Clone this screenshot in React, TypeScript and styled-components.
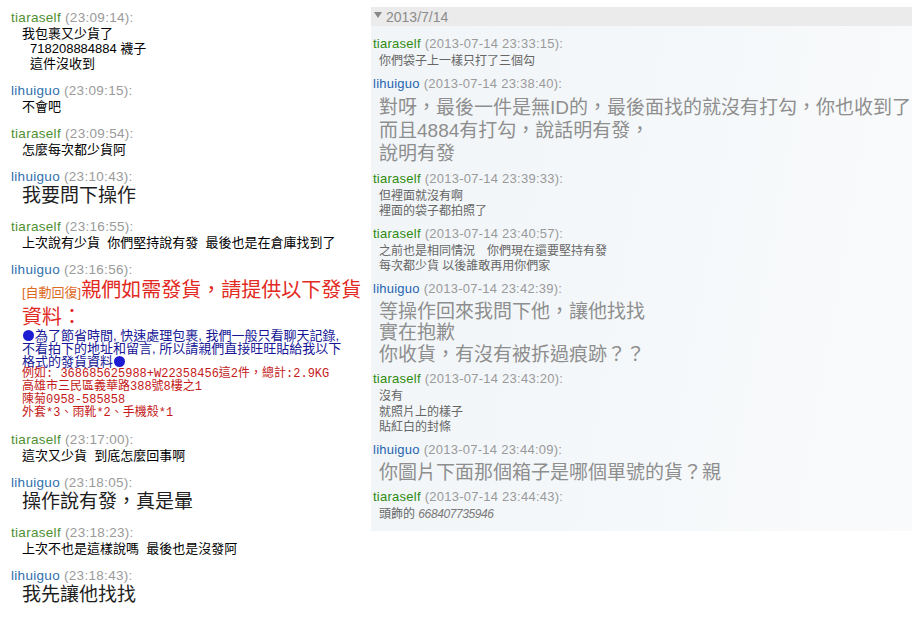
import { FC } from 'react';
import styled, { createGlobalStyle } from 'styled-components';

type Who = 'tiaraself' | 'lihuiguo';
type Side = 'left' | 'right';

interface LineData {
  text: string;
  big?: boolean;
  indent?: number;
}

interface MessageData {
  who: Who;
  time: string;
  lines: LineData[];
  tall?: boolean;
}

const leftMessages: MessageData[] = [
  {
    who: 'tiaraself',
    time: '23:09:14',
    lines: [
      { text: '我包裹又少貨了' },
      { text: '718208884884 襪子', indent: 8 },
      { text: '這件沒收到', indent: 8 },
    ],
  },
  { who: 'lihuiguo', time: '23:09:15', lines: [{ text: '不會吧' }] },
  { who: 'tiaraself', time: '23:09:54', lines: [{ text: '怎麼每次都少貨阿' }] },
  { who: 'lihuiguo', time: '23:10:43', lines: [{ text: '我要問下操作', big: true }] },
  {
    who: 'tiaraself',
    time: '23:16:55',
    lines: [{ text: '上次說有少貨  你們堅持說有發  最後也是在倉庫找到了' }],
  },
];

const leftMessagesAfter: MessageData[] = [
  { who: 'tiaraself', time: '23:17:00', lines: [{ text: '這次又少貨  到底怎麼回事啊' }] },
  { who: 'lihuiguo', time: '23:18:05', lines: [{ text: '操作說有發，真是暈', big: true }] },
  {
    who: 'tiaraself',
    time: '23:18:23',
    lines: [{ text: '上次不也是這樣說嗎  最後也是沒發阿' }],
  },
  { who: 'lihuiguo', time: '23:18:43', lines: [{ text: '我先讓他找找', big: true }] },
];

const rightMessages: MessageData[] = [
  {
    who: 'tiaraself',
    time: '2013-07-14 23:33:15',
    lines: [{ text: '你們袋子上一樣只打了三個勾' }],
  },
  {
    who: 'lihuiguo',
    time: '2013-07-14 23:38:40',
    tall: true,
    lines: [
      { text: '對呀，最後一件是無ID的，最後面找的就沒有打勾，你也收到了', big: true },
      { text: '而且4884有打勾，說話明有發，', big: true },
      { text: '說明有發', big: true },
    ],
  },
  {
    who: 'tiaraself',
    time: '2013-07-14 23:39:33',
    lines: [{ text: '但裡面就沒有啊' }, { text: '裡面的袋子都拍照了' }],
  },
  {
    who: 'tiaraself',
    time: '2013-07-14 23:40:57',
    lines: [
      { text: '之前也是相同情況　你們現在還要堅持有發' },
      { text: '每次都少貨 以後誰敢再用你們家' },
    ],
  },
  {
    who: 'lihuiguo',
    time: '2013-07-14 23:42:39',
    lines: [
      { text: '等操作回來我問下他，讓他找找', big: true },
      { text: '實在抱歉', big: true },
      { text: '你收貨，有沒有被拆過痕跡？？', big: true },
    ],
  },
  {
    who: 'tiaraself',
    time: '2013-07-14 23:43:20',
    lines: [{ text: '沒有' }, { text: '就照片上的樣子' }, { text: '貼紅白的封條' }],
  },
  {
    who: 'lihuiguo',
    time: '2013-07-14 23:44:09',
    lines: [{ text: '你圖片下面那個箱子是哪個單號的貨？親', big: true }],
  },
];

const GlobalStyle = createGlobalStyle`
  body {
    margin: 0;
    background: #ffffff;
    font-family: "Liberation Sans", "Noto Sans CJK TC", sans-serif;
  }
`;

const CJK = `"Liberation Sans", "Noto Sans CJK TC", sans-serif`;

const Page = styled.div`
  display: flex;
  align-items: flex-start;
  width: 912px;
  height: 617px;
  overflow: hidden;
`;

const LeftColumn = styled.div`
  width: 371px;
  flex-shrink: 0;
  box-sizing: border-box;
  padding: 9px 0 0 11px;
  display: flex;
  flex-direction: column;
  gap: 11px;
`;

const RightPanel = styled.div`
  flex: 1;
  margin-top: 7px;
  background: linear-gradient(100deg, #f1f5f8 0%, #f5f8fa 55%, #f9fafb 100%);
  padding-bottom: 8px;
`;

const DateHeader = styled.div`
  height: 19px;
  background: #ebebeb;
  display: flex;
  align-items: center;
  gap: 4px;
  padding-left: 3px;
  color: #8c8c8c;
  font-size: 14px;
  font-family: "Liberation Sans", sans-serif;
`;

const Caret = styled.span`
  width: 0;
  height: 0;
  border-left: 4px solid transparent;
  border-right: 4px solid transparent;
  border-top: 6px solid #888888;
  margin-top: -4px;
`;

const RightList = styled.div`
  padding: 9px 0 0 2px;
  display: flex;
  flex-direction: column;
  gap: 5px;
`;

const Block = styled.div``;

const NameLine = styled.div<{ $side: Side }>`
  height: 17px;
  line-height: 17px;
  font-size: ${(p) => (p.$side === 'left' ? '13.5px' : '13px')};
  letter-spacing: ${(p) => (p.$side === 'left' ? '0.3px' : '0.25px')};
  white-space: nowrap;
`;

const Sender = styled.span<{ $who: Who; $side: Side }>`
  color: ${(p) =>
    p.$who === 'lihuiguo'
      ? p.$side === 'left'
        ? '#2f6fae'
        : '#1f63b0'
      : p.$side === 'left'
        ? '#4f9032'
        : '#2f8a10'};
`;

const Time = styled.span`
  color: #9a9a9a;
`;

const Body = styled.div<{ $side: Side; $big: boolean }>`
  padding-left: ${(p) => (p.$side === 'left' ? '11px' : '6px')};
  padding-top: ${(p) => (p.$side === 'right' ? (p.$big ? '4px' : '2px') : '0')};
`;

const Line = styled.div<{ $side: Side; $big: boolean; $indent: number; $tall: boolean }>`
  font-family: ${CJK};
  white-space: pre;
  padding-left: ${(p) => p.$indent}px;
  font-size: ${(p) => (p.$big ? '19px' : p.$side === 'left' ? '13px' : '12px')};
  line-height: ${(p) =>
    p.$side === 'left'
      ? p.$big
        ? '22px'
        : '15px'
      : p.$big
        ? p.$tall
          ? '23px'
          : '21.5px'
        : '15.5px'};
  color: ${(p) =>
    p.$side === 'left' ? (p.$big ? '#1e1e1e' : '#000000') : p.$big ? '#8e8e8e' : '#666666'};
`;

const Digits = styled.span`
  font-style: italic;
  color: #7a7a7a;
  letter-spacing: -0.4px;
`;

const AutoReply = styled.div`
  padding-left: 11px;
`;

const AutoHead = styled.div`
  font-family: ${CJK};
  font-size: 20px;
  line-height: 24px;
  color: #e22a22;
  white-space: pre;
`;

const AutoTag = styled.span`
  font-size: 13px;
  color: #dd6a1e;
`;

const AutoBody = styled.div<{ $tone: 'blue' | 'red' }>`
  font-family: ${(p) =>
    p.$tone === 'red'
      ? `"Liberation Mono", "Noto Sans CJK TC", monospace`
      : `"Liberation Sans", "Noto Sans CJK TC", sans-serif`};
  font-size: ${(p) => (p.$tone === 'red' ? '12px' : '13px')};
  line-height: 13px;
  color: ${(p) => (p.$tone === 'red' ? '#c41a1a' : '#161696')};
  white-space: pre;
`;

const Dot = styled.span`
  display: inline-block;
  width: 11px;
  height: 11px;
  border-radius: 50%;
  background: #1c1cd0;
  margin: 0 1px;
  vertical-align: -1px;
`;

const Message: FC<{ data: MessageData; side: Side }> = ({ data, side }) => {
  const big = data.lines.some((l) => l.big);
  return (
    <Block>
      <NameLine $side={side}>
        <Sender $who={data.who} $side={side}>
          {data.who}
        </Sender>{' '}
        <Time>({data.time}):</Time>
      </NameLine>
      <Body $side={side} $big={big}>
        {data.lines.map((l, i) => (
          <Line
            key={i}
            $side={side}
            $big={!!l.big}
            $indent={l.indent ?? 0}
            $tall={!!data.tall}
          >
            {l.text}
          </Line>
        ))}
      </Body>
    </Block>
  );
};

const App: FC = () => {
  return (
    <>
      <GlobalStyle />
      <Page>
        <LeftColumn>
          {leftMessages.map((m, i) => (
            <Message key={i} data={m} side="left" />
          ))}
          <Block>
            <NameLine $side="left">
              <Sender $who="lihuiguo" $side="left">
                lihuiguo
              </Sender>{' '}
              <Time>(23:16:56):</Time>
            </NameLine>
            <AutoReply>
              <AutoHead>
                <AutoTag>[自動回復]</AutoTag>親們如需發貨，請提供以下發貨
                {'\n'}資料：
              </AutoHead>
              <AutoBody $tone="blue">
                <Dot />為了節省時間, 快速處理包裹, 我們一般只看聊天記錄,{'\n'}不看拍下的地址和留言, 所以請親們直接旺旺貼給我以下
                {'\n'}格式的發貨資料<Dot />
              </AutoBody>
              <AutoBody $tone="red">
                {'例如: 368685625988+W22358456這2件，總計:2.9KG\n高雄市三民區義華路388號8樓之1\n陳菊0958-585858\n外套*3、雨靴*2、手機殼*1'}
              </AutoBody>
            </AutoReply>
          </Block>
          {leftMessagesAfter.map((m, i) => (
            <Message key={i} data={m} side="left" />
          ))}
        </LeftColumn>

        <RightPanel>
          <DateHeader>
            <Caret />
            2013/7/14
          </DateHeader>
          <RightList>
            {rightMessages.map((m, i) => (
              <Message key={i} data={m} side="right" />
            ))}
            <Block>
              <NameLine $side="right">
                <Sender $who="tiaraself" $side="right">
                  tiaraself
                </Sender>{' '}
                <Time>(2013-07-14 23:44:43):</Time>
              </NameLine>
              <Body $side="right" $big={false}>
                <Line $side="right" $big={false} $indent={0} $tall={false}>
                  頭飾的 <Digits>668407735946</Digits>
                </Line>
              </Body>
            </Block>
          </RightList>
        </RightPanel>
      </Page>
    </>
  );
};

export default App;
